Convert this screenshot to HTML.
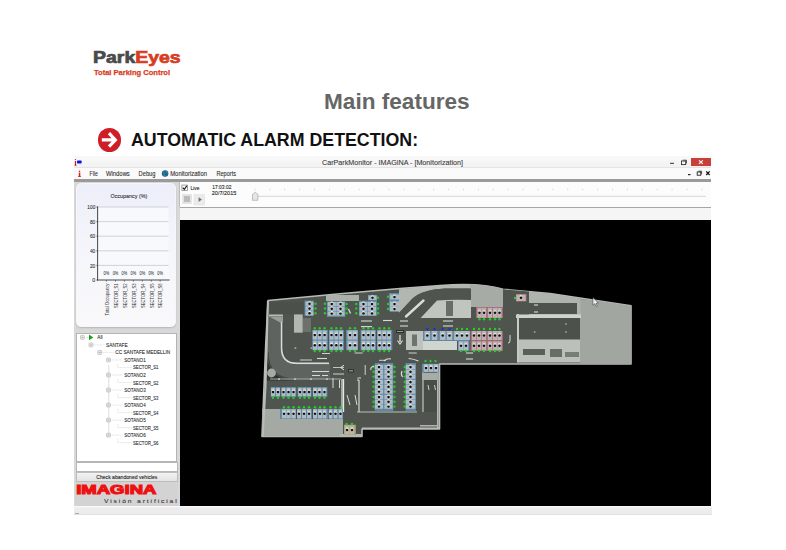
<!DOCTYPE html>
<html><head><meta charset="utf-8">
<style>
html,body{margin:0;padding:0;width:786px;height:550px;overflow:hidden;background:#fff;font-family:"Liberation Sans",sans-serif;}
.a{position:absolute;white-space:nowrap;}
#logo1{left:92.6px;top:47.4px;font-size:16.5px;transform:scaleX(1.18);transform-origin:0 0;font-weight:bold;color:#4a4a4a;line-height:20px;-webkit-text-stroke:0.7px #4a4a4a;}
#logo1 span{color:#d83c1e;-webkit-text-stroke:0.7px #d83c1e;}
#logo2{left:93.6px;top:68.4px;font-size:7.7px;letter-spacing:0px;transform:scaleX(0.98);transform-origin:0 0;font-weight:bold;color:#d83c1e;line-height:10px;-webkit-text-stroke:0.25px #d83c1e;}
#title{left:324px;top:89px;font-size:22.6px;font-weight:bold;color:#666;line-height:26px;}
#bullet{left:97.6px;top:128.3px;width:23.8px;height:23.8px;border-radius:50%;background:#d01e26;}
#head{left:131px;top:130px;font-size:17.8px;font-weight:bold;color:#111;line-height:20px;}

#win{left:73.5px;top:155.5px;width:637.5px;height:359.5px;background:#d8d8d8;}
#tbar{left:73.5px;top:155.5px;width:637.5px;height:11.6px;background:linear-gradient(#f9f9f9,#f2f2f2);}
#mbar{left:73.5px;top:167px;width:637.5px;height:12.5px;background:#fafafa;border-top:1px solid #e4e4e4;box-sizing:border-box;}
#thick{left:73.5px;top:179.2px;width:637.7px;height:2.5px;background:#9a9a9a;}
.t7{font-size:7px;color:#333;line-height:8px;}
#ttl{left:321px;top:158.5px;color:#444;}
#closeb{left:690.5px;top:157.5px;width:20.5px;height:8.5px;background:#c9403a;}
#toolb{left:179.8px;top:181.5px;width:531.2px;height:26px;background:#fcfcfc;border-bottom:1px solid #a6a6a6;box-sizing:border-box;}
#strip{left:179.8px;top:207.5px;width:531.2px;height:12.7px;background:#f5f5f5;}
#black{left:179.8px;top:220.3px;width:531.7px;height:286.1px;background:#000;}
#chartp{left:76.4px;top:183px;width:100px;height:144px;border-radius:5px;background:linear-gradient(#eceef9,#f4f5fb 40%,#f9f9fb);border:1px solid #f6f6f8;box-sizing:border-box;box-shadow:0 1px 1.5px #b8b8b8;}
#treep{left:76.4px;top:333px;width:100.8px;height:128.5px;background:#fff;border:1px solid #b4b4b4;box-sizing:border-box;}
#txtb{left:76.4px;top:462px;width:101.6px;height:9.5px;background:#fff;border:1px solid #b8b8b8;box-sizing:border-box;}
#btn{left:76.4px;top:472px;width:101.6px;height:9.5px;background:linear-gradient(#f2f2f2,#e3e3e3);border:1px solid #bdbdbd;box-sizing:border-box;}
#imag{left:74.5px;top:481.5px;width:103.5px;height:24.3px;background:#d3d3d3;}
#status{left:73.5px;top:506.4px;width:638px;height:8.8px;background:linear-gradient(#fafafa 15%,#ededed 20%,#ececec);border-bottom:1px solid #e2e2e2;box-sizing:border-box;}
</style></head><body>
<div class="a" id="logo1">Park<span>Eyes</span></div>
<div class="a" id="logo2">Total Parking Control</div>
<div class="a" id="title">Main features</div>
<div class="a" id="bullet"><svg width="24" height="24" viewBox="0 0 24 24" style="display:block"><path d="M3.8 11.9H16.5M11 5.2L17.3 11.9L11 18.6" stroke="#fff" stroke-width="3.2" fill="none"/></svg></div>
<div class="a" id="head">AUTOMATIC ALARM DETECTION:</div>
<div class="a" id="win"></div>
<div class="a" id="tbar"></div>
<div class="a" id="mbar"></div>
<div class="a" id="thick"></div>
<div class="a" id="closeb"></div>
<div class="a" id="toolb"></div>
<div class="a" id="strip"></div>
<div class="a" id="black"></div>
<div class="a" id="chartp"></div>
<div class="a" id="treep"></div>
<div class="a" id="txtb"></div>
<div class="a" id="btn"></div>
<div class="a" id="imag"></div>
<div class="a" id="status"></div>
<svg class="a" style="left:0;top:0" width="786" height="550" font-family="Liberation Sans"><rect x="74.9" y="161" width="1.2" height="4.4" fill="#d01a1a"/><rect x="74.5" y="164.8" width="2" height="0.8" fill="#d01a1a"/><circle cx="75.5" cy="159.6" r="0.65" fill="#d01a1a"/><rect x="77" y="160.5" width="4.6" height="3" rx="0.8" fill="#1010e0"/><text x="322" y="165.4" font-size="7.6" textLength="141" lengthAdjust="spacingAndGlyphs" fill="#3a3a3a" stroke="#3a3a3a" stroke-width="0.1">CarParkMonitor - IMAGiNA - [Monitorization]</text><rect x="670" y="162.8" width="4" height="1" fill="#333"/><rect x="681.5" y="161" width="4.2" height="3.6" fill="none" stroke="#333" stroke-width="0.9"/><path d="M682.8 160.2H686.5V163.4" fill="none" stroke="#333" stroke-width="0.8"/><path d="M699 160.3L702.8 163.8M702.8 160.3L699 163.8" stroke="#fff" stroke-width="1.1"/><rect x="688" y="174" width="2.5" height="1.2" fill="#222"/><rect x="697.2" y="172" width="3.6" height="3.2" fill="none" stroke="#222" stroke-width="0.9"/><path d="M698.3 171.2H701.6V174.2" fill="none" stroke="#222" stroke-width="0.8"/><path d="M706.2 171.4L709.6 175M709.6 171.4L706.2 175" stroke="#111" stroke-width="1.2"/><rect x="78.8" y="172.6" width="1.5" height="4.2" fill="#d42020"/><rect x="78.2" y="176" width="2.6" height="0.9" fill="#d42020"/><circle cx="79.5" cy="171.2" r="0.75" fill="#d42020"/><text x="89.6" y="176.2" font-size="7.4" textLength="8.2" lengthAdjust="spacingAndGlyphs" fill="#2a2a2a" stroke="#2a2a2a" stroke-width="0.1">File</text><text x="106" y="176.2" font-size="7.4" textLength="23.8" lengthAdjust="spacingAndGlyphs" fill="#2a2a2a" stroke="#2a2a2a" stroke-width="0.1">Windows</text><text x="138.6" y="176.2" font-size="7.4" textLength="16.8" lengthAdjust="spacingAndGlyphs" fill="#2a2a2a" stroke="#2a2a2a" stroke-width="0.1">Debug</text><text x="170.2" y="176.2" font-size="7.4" textLength="36.8" lengthAdjust="spacingAndGlyphs" fill="#2a2a2a" stroke="#2a2a2a" stroke-width="0.1">Monitorization</text><text x="216.4" y="176.2" font-size="7.4" textLength="19.6" lengthAdjust="spacingAndGlyphs" fill="#2a2a2a" stroke="#2a2a2a" stroke-width="0.1">Reports</text><circle cx="165.1" cy="173.5" r="3.3" fill="#1f5fae"/><path d="M163 171.5q1.5 1 1 2.5t1.8 2.2M166.5 170.8q-.5 1.5 1.2 2" stroke="#3a9a3a" stroke-width="1.1" fill="none"/><rect x="98.5" y="207" width="70" height="73" fill="#f8f9fd"/><line x1="98" y1="207.0" x2="168.5" y2="207.0" stroke="#c6c8cf" stroke-width="0.8"/><text x="87.3" y="209.1" font-size="5.8" textLength="8.0" lengthAdjust="spacingAndGlyphs" fill="#333" stroke="#333" stroke-width="0.1">100</text><line x1="96.3" y1="207.0" x2="98" y2="207.0" stroke="#333" stroke-width="0.6"/><line x1="98" y1="221.6" x2="168.5" y2="221.6" stroke="#c6c8cf" stroke-width="0.8"/><text x="89.89999999999999" y="223.7" font-size="5.8" textLength="5.4" lengthAdjust="spacingAndGlyphs" fill="#333" stroke="#333" stroke-width="0.1">80</text><line x1="96.3" y1="221.6" x2="98" y2="221.6" stroke="#333" stroke-width="0.6"/><line x1="98" y1="236.2" x2="168.5" y2="236.2" stroke="#c6c8cf" stroke-width="0.8"/><text x="89.89999999999999" y="238.29999999999998" font-size="5.8" textLength="5.4" lengthAdjust="spacingAndGlyphs" fill="#333" stroke="#333" stroke-width="0.1">60</text><line x1="96.3" y1="236.2" x2="98" y2="236.2" stroke="#333" stroke-width="0.6"/><line x1="98" y1="250.8" x2="168.5" y2="250.8" stroke="#c6c8cf" stroke-width="0.8"/><text x="89.89999999999999" y="252.9" font-size="5.8" textLength="5.4" lengthAdjust="spacingAndGlyphs" fill="#333" stroke="#333" stroke-width="0.1">40</text><line x1="96.3" y1="250.8" x2="98" y2="250.8" stroke="#333" stroke-width="0.6"/><line x1="98" y1="265.4" x2="168.5" y2="265.4" stroke="#c6c8cf" stroke-width="0.8"/><text x="89.89999999999999" y="267.5" font-size="5.8" textLength="5.4" lengthAdjust="spacingAndGlyphs" fill="#333" stroke="#333" stroke-width="0.1">20</text><line x1="96.3" y1="265.4" x2="98" y2="265.4" stroke="#333" stroke-width="0.6"/><text x="92.3" y="282.1" font-size="5.8" textLength="3.0" lengthAdjust="spacingAndGlyphs" fill="#333" stroke="#333" stroke-width="0.1">0</text><line x1="96.3" y1="280.0" x2="98" y2="280.0" stroke="#333" stroke-width="0.6"/><line x1="97.6" y1="206.5" x2="97.6" y2="280.5" stroke="#333" stroke-width="0.9"/><line x1="97.2" y1="280" x2="169.6" y2="280" stroke="#333" stroke-width="0.9"/><text x="110.5" y="197.9" font-size="5.9" textLength="36.9" lengthAdjust="spacingAndGlyphs" fill="#333" stroke="#333" stroke-width="0.1">Occupancy (%)</text><line x1="106.4" y1="280" x2="106.4" y2="281.6" stroke="#333" stroke-width="0.6"/><text x="103.60000000000001" y="274.6" font-size="5.4" textLength="5.6" lengthAdjust="spacingAndGlyphs" fill="#333" stroke="#333" stroke-width="0.05">0%</text><g transform="translate(108.7,283.5) rotate(-90)"><text x="-32" y="0" font-size="5.0" textLength="32" lengthAdjust="spacingAndGlyphs" fill="#333" stroke="#333" stroke-width="0">Total Occupancy</text></g><line x1="115.5" y1="280" x2="115.5" y2="281.6" stroke="#333" stroke-width="0.6"/><text x="112.7" y="274.6" font-size="5.4" textLength="5.6" lengthAdjust="spacingAndGlyphs" fill="#333" stroke="#333" stroke-width="0.05">0%</text><g transform="translate(117.8,283.5) rotate(-90)"><text x="-24.5" y="0" font-size="5.0" textLength="24.5" lengthAdjust="spacingAndGlyphs" fill="#333" stroke="#333" stroke-width="0">SECTOR_S1</text></g><line x1="124.4" y1="280" x2="124.4" y2="281.6" stroke="#333" stroke-width="0.6"/><text x="121.60000000000001" y="274.6" font-size="5.4" textLength="5.6" lengthAdjust="spacingAndGlyphs" fill="#333" stroke="#333" stroke-width="0.05">0%</text><g transform="translate(126.7,283.5) rotate(-90)"><text x="-24.5" y="0" font-size="5.0" textLength="24.5" lengthAdjust="spacingAndGlyphs" fill="#333" stroke="#333" stroke-width="0">SECTOR_S2</text></g><line x1="133.4" y1="280" x2="133.4" y2="281.6" stroke="#333" stroke-width="0.6"/><text x="130.6" y="274.6" font-size="5.4" textLength="5.6" lengthAdjust="spacingAndGlyphs" fill="#333" stroke="#333" stroke-width="0.05">0%</text><g transform="translate(135.70000000000002,283.5) rotate(-90)"><text x="-24.5" y="0" font-size="5.0" textLength="24.5" lengthAdjust="spacingAndGlyphs" fill="#333" stroke="#333" stroke-width="0">SECTOR_S3</text></g><line x1="142.3" y1="280" x2="142.3" y2="281.6" stroke="#333" stroke-width="0.6"/><text x="139.5" y="274.6" font-size="5.4" textLength="5.6" lengthAdjust="spacingAndGlyphs" fill="#333" stroke="#333" stroke-width="0.05">0%</text><g transform="translate(144.60000000000002,283.5) rotate(-90)"><text x="-24.5" y="0" font-size="5.0" textLength="24.5" lengthAdjust="spacingAndGlyphs" fill="#333" stroke="#333" stroke-width="0">SECTOR_S4</text></g><line x1="151.2" y1="280" x2="151.2" y2="281.6" stroke="#333" stroke-width="0.6"/><text x="148.39999999999998" y="274.6" font-size="5.4" textLength="5.6" lengthAdjust="spacingAndGlyphs" fill="#333" stroke="#333" stroke-width="0.05">0%</text><g transform="translate(153.5,283.5) rotate(-90)"><text x="-24.5" y="0" font-size="5.0" textLength="24.5" lengthAdjust="spacingAndGlyphs" fill="#333" stroke="#333" stroke-width="0">SECTOR_S5</text></g><line x1="160.1" y1="280" x2="160.1" y2="281.6" stroke="#333" stroke-width="0.6"/><text x="157.29999999999998" y="274.6" font-size="5.4" textLength="5.6" lengthAdjust="spacingAndGlyphs" fill="#333" stroke="#333" stroke-width="0.05">0%</text><g transform="translate(162.4,283.5) rotate(-90)"><text x="-24.5" y="0" font-size="5.0" textLength="24.5" lengthAdjust="spacingAndGlyphs" fill="#333" stroke="#333" stroke-width="0">SECTOR_S6</text></g><line x1="108.8" y1="365" x2="108.8" y2="434" stroke="#d0d0d0" stroke-width="0.7"/><text x="97.3" y="339.4" font-size="5.6" textLength="5.2" lengthAdjust="spacingAndGlyphs" fill="#2a2a2a" stroke="#2a2a2a" stroke-width="0.1">All</text><rect x="80.5" y="335.5" width="3.8" height="3.8" rx="0.6" fill="#ececec" stroke="#ababab" stroke-width="0.6"/><line x1="81.4" y1="337.4" x2="83.4" y2="337.4" stroke="#777" stroke-width="0.5"/><line x1="84.3" y1="337.4" x2="88.6" y2="337.4" stroke="#c8c8c8" stroke-width="0.6" stroke-dasharray="0.8 0.6"/><path d="M89 334.5L93.3 337.4L89 340.29999999999995Z" fill="#18a018"/><text x="106" y="346.91999999999996" font-size="5.6" textLength="21.7" lengthAdjust="spacingAndGlyphs" fill="#2a2a2a" stroke="#2a2a2a" stroke-width="0.1">SANTAFE</text><rect x="89" y="343.02" width="3.8" height="3.8" rx="0.6" fill="#ececec" stroke="#ababab" stroke-width="0.6"/><line x1="89.9" y1="344.91999999999996" x2="91.9" y2="344.91999999999996" stroke="#777" stroke-width="0.5"/><line x1="92.8" y1="344.91999999999996" x2="104.5" y2="344.91999999999996" stroke="#c8c8c8" stroke-width="0.6" stroke-dasharray="0.8 0.6"/><text x="115.2" y="354.44" font-size="5.6" textLength="55" lengthAdjust="spacingAndGlyphs" fill="#2a2a2a" stroke="#2a2a2a" stroke-width="0.1">CC SANTAFE MEDELLIN</text><rect x="97.8" y="350.54" width="3.8" height="3.8" rx="0.6" fill="#ececec" stroke="#ababab" stroke-width="0.6"/><line x1="98.7" y1="352.44" x2="100.7" y2="352.44" stroke="#777" stroke-width="0.5"/><line x1="101.6" y1="352.44" x2="113.7" y2="352.44" stroke="#c8c8c8" stroke-width="0.6" stroke-dasharray="0.8 0.6"/><text x="124.3" y="361.96" font-size="5.6" textLength="21.4" lengthAdjust="spacingAndGlyphs" fill="#2a2a2a" stroke="#2a2a2a" stroke-width="0.1">SOTANO1</text><rect x="106.6" y="358.06" width="3.8" height="3.8" rx="0.6" fill="#ececec" stroke="#ababab" stroke-width="0.6"/><line x1="107.5" y1="359.96" x2="109.5" y2="359.96" stroke="#777" stroke-width="0.5"/><line x1="110.39999999999999" y1="359.96" x2="122.8" y2="359.96" stroke="#c8c8c8" stroke-width="0.6" stroke-dasharray="0.8 0.6"/><text x="133" y="369.47999999999996" font-size="5.6" textLength="25.5" lengthAdjust="spacingAndGlyphs" fill="#2a2a2a" stroke="#2a2a2a" stroke-width="0.1">SECTOR_S1</text><path d="M117.9 363.87999999999994V367.47999999999996H131.8" fill="none" stroke="#c8c8c8" stroke-width="0.6" stroke-dasharray="0.8 0.6"/><text x="124.3" y="377.0" font-size="5.6" textLength="21.4" lengthAdjust="spacingAndGlyphs" fill="#2a2a2a" stroke="#2a2a2a" stroke-width="0.1">SOTANO2</text><rect x="106.6" y="373.1" width="3.8" height="3.8" rx="0.6" fill="#ececec" stroke="#ababab" stroke-width="0.6"/><line x1="107.5" y1="375.0" x2="109.5" y2="375.0" stroke="#777" stroke-width="0.5"/><line x1="110.39999999999999" y1="375.0" x2="122.8" y2="375.0" stroke="#c8c8c8" stroke-width="0.6" stroke-dasharray="0.8 0.6"/><text x="133" y="384.52" font-size="5.6" textLength="25.5" lengthAdjust="spacingAndGlyphs" fill="#2a2a2a" stroke="#2a2a2a" stroke-width="0.1">SECTOR_S2</text><path d="M117.9 378.91999999999996V382.52H131.8" fill="none" stroke="#c8c8c8" stroke-width="0.6" stroke-dasharray="0.8 0.6"/><text x="124.3" y="392.03999999999996" font-size="5.6" textLength="21.4" lengthAdjust="spacingAndGlyphs" fill="#2a2a2a" stroke="#2a2a2a" stroke-width="0.1">SOTANO3</text><rect x="106.6" y="388.14" width="3.8" height="3.8" rx="0.6" fill="#ececec" stroke="#ababab" stroke-width="0.6"/><line x1="107.5" y1="390.03999999999996" x2="109.5" y2="390.03999999999996" stroke="#777" stroke-width="0.5"/><line x1="110.39999999999999" y1="390.03999999999996" x2="122.8" y2="390.03999999999996" stroke="#c8c8c8" stroke-width="0.6" stroke-dasharray="0.8 0.6"/><text x="133" y="399.55999999999995" font-size="5.6" textLength="25.5" lengthAdjust="spacingAndGlyphs" fill="#2a2a2a" stroke="#2a2a2a" stroke-width="0.1">SECTOR_S3</text><path d="M117.9 393.9599999999999V397.55999999999995H131.8" fill="none" stroke="#c8c8c8" stroke-width="0.6" stroke-dasharray="0.8 0.6"/><text x="124.3" y="407.08" font-size="5.6" textLength="21.4" lengthAdjust="spacingAndGlyphs" fill="#2a2a2a" stroke="#2a2a2a" stroke-width="0.1">SOTANO4</text><rect x="106.6" y="403.18" width="3.8" height="3.8" rx="0.6" fill="#ececec" stroke="#ababab" stroke-width="0.6"/><line x1="107.5" y1="405.08" x2="109.5" y2="405.08" stroke="#777" stroke-width="0.5"/><line x1="110.39999999999999" y1="405.08" x2="122.8" y2="405.08" stroke="#c8c8c8" stroke-width="0.6" stroke-dasharray="0.8 0.6"/><text x="133" y="414.59999999999997" font-size="5.6" textLength="25.5" lengthAdjust="spacingAndGlyphs" fill="#2a2a2a" stroke="#2a2a2a" stroke-width="0.1">SECTOR_S4</text><path d="M117.9 408.99999999999994V412.59999999999997H131.8" fill="none" stroke="#c8c8c8" stroke-width="0.6" stroke-dasharray="0.8 0.6"/><text x="124.3" y="422.12" font-size="5.6" textLength="21.4" lengthAdjust="spacingAndGlyphs" fill="#2a2a2a" stroke="#2a2a2a" stroke-width="0.1">SOTANO5</text><rect x="106.6" y="418.22" width="3.8" height="3.8" rx="0.6" fill="#ececec" stroke="#ababab" stroke-width="0.6"/><line x1="107.5" y1="420.12" x2="109.5" y2="420.12" stroke="#777" stroke-width="0.5"/><line x1="110.39999999999999" y1="420.12" x2="122.8" y2="420.12" stroke="#c8c8c8" stroke-width="0.6" stroke-dasharray="0.8 0.6"/><text x="133" y="429.64" font-size="5.6" textLength="25.5" lengthAdjust="spacingAndGlyphs" fill="#2a2a2a" stroke="#2a2a2a" stroke-width="0.1">SECTOR_S5</text><path d="M117.9 424.03999999999996V427.64H131.8" fill="none" stroke="#c8c8c8" stroke-width="0.6" stroke-dasharray="0.8 0.6"/><text x="124.3" y="437.15999999999997" font-size="5.6" textLength="21.4" lengthAdjust="spacingAndGlyphs" fill="#2a2a2a" stroke="#2a2a2a" stroke-width="0.1">SOTANO6</text><rect x="106.6" y="433.26" width="3.8" height="3.8" rx="0.6" fill="#ececec" stroke="#ababab" stroke-width="0.6"/><line x1="107.5" y1="435.15999999999997" x2="109.5" y2="435.15999999999997" stroke="#777" stroke-width="0.5"/><line x1="110.39999999999999" y1="435.15999999999997" x2="122.8" y2="435.15999999999997" stroke="#c8c8c8" stroke-width="0.6" stroke-dasharray="0.8 0.6"/><text x="133" y="444.67999999999995" font-size="5.6" textLength="25.5" lengthAdjust="spacingAndGlyphs" fill="#2a2a2a" stroke="#2a2a2a" stroke-width="0.1">SECTOR_S6</text><path d="M117.9 439.0799999999999V442.67999999999995H131.8" fill="none" stroke="#c8c8c8" stroke-width="0.6" stroke-dasharray="0.8 0.6"/><text x="126.8" y="479" font-size="5.9" textLength="61" lengthAdjust="spacingAndGlyphs" fill="#222" stroke="#222" stroke-width="0.1" text-anchor="middle">Check abandoned vehicles</text><text x="76.2" y="494.2" font-size="12.9" font-weight="bold" fill="#ee1111" stroke="#ee1111" stroke-width="1.1" textLength="80.2" lengthAdjust="spacingAndGlyphs">IMAGiNA</text><text x="103.9" y="503.0" font-size="5.2" textLength="72.8" lengthAdjust="spacingAndGlyphs" fill="#3a3a3a" stroke="#3a3a3a" stroke-width="0.1">V i s i ó n &#160; a r t i f i c i a l</text><rect x="75" y="513" width="4" height="0.8" fill="#999"/><line x1="179.5" y1="181.5" x2="179.5" y2="207" stroke="#b4b4b4" stroke-width="0.8"/><rect x="181.9" y="185.1" width="5.6" height="5.4" fill="#fff" stroke="#777" stroke-width="0.7"/><path d="M182.8 187.6L184.3 189.4L186.8 185.9" fill="none" stroke="#111" stroke-width="1.1"/><text x="190.5" y="189.7" font-size="5.7" textLength="9.0" lengthAdjust="spacingAndGlyphs" fill="#222" stroke="#222" stroke-width="0.1">Live</text><text x="212.3" y="189.0" font-size="5.7" textLength="19.1" lengthAdjust="spacingAndGlyphs" fill="#222" stroke="#222" stroke-width="0.1">17:03:02</text><text x="211.8" y="194.8" font-size="5.7" textLength="24.5" lengthAdjust="spacingAndGlyphs" fill="#222" stroke="#222" stroke-width="0.1">20/7/2015</text><rect x="182.6" y="194.6" width="9" height="9" fill="#e4e4e4" stroke="#d8d8d8" stroke-width="0.5"/><path d="M184 197H190M184 199H190M184 201H190" stroke="#8a8a8a" stroke-width="0.9"/><rect x="194" y="194.5" width="10.7" height="10.5" fill="#ebebeb" stroke="#dedede" stroke-width="0.5"/><path d="M198.6 197.3L201.8 199.6L198.6 201.9Z" fill="#6e6e6e"/><line x1="254.9" y1="188.6" x2="254.9" y2="190.4" stroke="#c8c8c8" stroke-width="0.6"/><line x1="269.8" y1="188.6" x2="269.8" y2="190.4" stroke="#c8c8c8" stroke-width="0.6"/><line x1="284.7" y1="188.6" x2="284.7" y2="190.4" stroke="#c8c8c8" stroke-width="0.6"/><line x1="299.6" y1="188.6" x2="299.6" y2="190.4" stroke="#c8c8c8" stroke-width="0.6"/><line x1="314.5" y1="188.6" x2="314.5" y2="190.4" stroke="#c8c8c8" stroke-width="0.6"/><line x1="329.4" y1="188.6" x2="329.4" y2="190.4" stroke="#c8c8c8" stroke-width="0.6"/><line x1="344.3" y1="188.6" x2="344.3" y2="190.4" stroke="#c8c8c8" stroke-width="0.6"/><line x1="359.2" y1="188.6" x2="359.2" y2="190.4" stroke="#c8c8c8" stroke-width="0.6"/><line x1="374.1" y1="188.6" x2="374.1" y2="190.4" stroke="#c8c8c8" stroke-width="0.6"/><line x1="389.0" y1="188.6" x2="389.0" y2="190.4" stroke="#c8c8c8" stroke-width="0.6"/><line x1="403.9" y1="188.6" x2="403.9" y2="190.4" stroke="#c8c8c8" stroke-width="0.6"/><line x1="418.8" y1="188.6" x2="418.8" y2="190.4" stroke="#c8c8c8" stroke-width="0.6"/><line x1="433.7" y1="188.6" x2="433.7" y2="190.4" stroke="#c8c8c8" stroke-width="0.6"/><line x1="448.6" y1="188.6" x2="448.6" y2="190.4" stroke="#c8c8c8" stroke-width="0.6"/><line x1="463.5" y1="188.6" x2="463.5" y2="190.4" stroke="#c8c8c8" stroke-width="0.6"/><line x1="478.4" y1="188.6" x2="478.4" y2="190.4" stroke="#c8c8c8" stroke-width="0.6"/><line x1="493.3" y1="188.6" x2="493.3" y2="190.4" stroke="#c8c8c8" stroke-width="0.6"/><line x1="508.2" y1="188.6" x2="508.2" y2="190.4" stroke="#c8c8c8" stroke-width="0.6"/><line x1="523.1" y1="188.6" x2="523.1" y2="190.4" stroke="#c8c8c8" stroke-width="0.6"/><line x1="538.0" y1="188.6" x2="538.0" y2="190.4" stroke="#c8c8c8" stroke-width="0.6"/><line x1="552.9" y1="188.6" x2="552.9" y2="190.4" stroke="#c8c8c8" stroke-width="0.6"/><line x1="567.8" y1="188.6" x2="567.8" y2="190.4" stroke="#c8c8c8" stroke-width="0.6"/><line x1="582.7" y1="188.6" x2="582.7" y2="190.4" stroke="#c8c8c8" stroke-width="0.6"/><line x1="597.6" y1="188.6" x2="597.6" y2="190.4" stroke="#c8c8c8" stroke-width="0.6"/><line x1="612.5" y1="188.6" x2="612.5" y2="190.4" stroke="#c8c8c8" stroke-width="0.6"/><line x1="627.4" y1="188.6" x2="627.4" y2="190.4" stroke="#c8c8c8" stroke-width="0.6"/><line x1="642.3" y1="188.6" x2="642.3" y2="190.4" stroke="#c8c8c8" stroke-width="0.6"/><line x1="657.2" y1="188.6" x2="657.2" y2="190.4" stroke="#c8c8c8" stroke-width="0.6"/><line x1="672.1" y1="188.6" x2="672.1" y2="190.4" stroke="#c8c8c8" stroke-width="0.6"/><line x1="687.0" y1="188.6" x2="687.0" y2="190.4" stroke="#c8c8c8" stroke-width="0.6"/><line x1="701.9" y1="188.6" x2="701.9" y2="190.4" stroke="#c8c8c8" stroke-width="0.6"/><line x1="258" y1="196.3" x2="706" y2="196.3" stroke="#d6d6d6" stroke-width="1"/><path d="M252.5 194.5L255.2 192.3L257.9 194.5V200.3H252.5Z" fill="#e6e6e6" stroke="#9a9a9a" stroke-width="0.6"/></svg>
<svg class="a" style="left:0;top:0" width="786" height="550"><path d="M268 300.5L340 293.7L400 288.5L440 285.6Q480 282.5 503 289.3L550 293.5L593 300L631 305.7V364H439.5V429H362V436.5H262L265.7 345Z" fill="#4f544f" stroke="#b7bcb7" stroke-width="1.6" stroke-linejoin="round"/><polygon points="262,409 280,409 280,419 343,419 343,436.5 262,436.5" fill="#a4a9a4"/><polygon points="580,299 593,300 631,305.7 631,364 580,364" fill="#a1a6a1"/><path d="M470 284.2Q490 284.5 503 289.3V307H470Z" fill="#a6aba6"/><polygon points="503,289.3 529,291.5 529,302 503,302" fill="#4f544f"/><polygon points="529,291.6 550,293.5 580,298.5 581,318 529,318" fill="#aeb3ae"/><rect x="529" y="303" width="48" height="11" fill="#4e534e"/><rect x="516" y="314.5" width="65" height="3.5" fill="#ced3ce"/><rect x="519" y="318" width="61" height="21.5" fill="#4c514c"/><rect x="518" y="339.5" width="62" height="23.0" fill="#bbc0bb"/><rect x="517" y="314" width="2" height="48.5" fill="#c6cbc6"/><rect x="523" y="349" width="22" height="6" fill="#5a5f5a"/><rect x="550" y="349" width="12" height="8" fill="#686d68"/><rect x="565" y="352" width="14" height="5" fill="#787d78"/><circle cx="534.7" cy="332" r="0.9" fill="#989d98"/><circle cx="566" cy="324" r="0.9" fill="#989d98"/><circle cx="566" cy="332" r="0.9" fill="#989d98"/><path d="M399 289.2L440 285.6Q455 284.6 470 284.4V288.6L445 288.5Q422 289.5 412 299L399 313Z" fill="#b2b7b2"/><path d="M470 288.6L445 288.5Q422 289.5 412 299L399 313V318H420.6L437 300.5Q450 299.5 471 300V288.6Z" fill="#4f544f"/><path d="M420.6 318L437 300.5Q450 299.5 471 300V318Z" fill="#c0c5c0"/><rect x="446" y="301" width="7" height="15" fill="#686d68"/><line x1="406" y1="316.5" x2="423.5" y2="300.5" stroke="#d8ddd8" stroke-width="2.4" stroke-linecap="round"/><rect x="396" y="330" width="8" height="3" fill="#2e2e2e"/><rect x="397" y="331" width="6" height="1" fill="#989d98"/><rect x="326" y="295" width="33" height="6" fill="#abb0ab"/><rect x="270" y="302" width="34" height="12.5" fill="#4b504b"/><rect x="269" y="314.5" width="14" height="2.0" fill="#b7bcb7"/><rect x="294" y="314.4" width="8.7" height="18.3" fill="#b2b7b2"/><rect x="303" y="318" width="8" height="14" fill="#6c716c"/><path d="M268.5 317 H282.5 V348 Q282.5 363.6 298 363.6 H330 V379 H296 Q268 379 268 352 Z" fill="#5f635f"/><path d="M266.5 350 Q266.5 380.5 296 380.5 H266 Z" fill="#2f322f"/><path d="M268 352 Q268 379 296 379" fill="none" stroke="#3a3d3a" stroke-width="0.9"/><path d="M270 317 L283 317 L283 324 Z" fill="#9a9e9a"/><path d="M282.6 322 L282.6 348 Q282.6 364.2 298 364.2 L329 364.2" fill="none" stroke="#3e413e" stroke-width="1.2"/><path d="M281.6 322 L281.6 348 Q281.6 363.4 297 363.4 L329 363.4" fill="none" stroke="#d8dcd8" stroke-width="1.6"/><line x1="270" y1="379" x2="341" y2="379" stroke="#a6aba6" stroke-width="1.0"/><rect x="278.2" y="378.2" width="1.6" height="1.8" fill="#c6cbc6"/><rect x="294.2" y="378.2" width="1.6" height="1.8" fill="#c6cbc6"/><rect x="310.2" y="378.2" width="1.6" height="1.8" fill="#c6cbc6"/><rect x="326.2" y="378.2" width="1.6" height="1.8" fill="#c6cbc6"/><line x1="342" y1="379" x2="342" y2="419" stroke="#bec3be" stroke-width="1.5"/><polyline points="267.9,301 266.8,345 265.5,387 262.8,436" fill="none" stroke="#b8bcb8" stroke-width="2.0"/><circle cx="271.5" cy="373" r="4.4" fill="#a6aaa6"/><rect x="294.5" y="347.2" width="1.8" height="1.8" fill="#9ea39e"/><rect x="310.5" y="347.2" width="1.8" height="1.8" fill="#9ea39e"/><line x1="312" y1="371.5" x2="329" y2="371.5" stroke="#d6dbd6" stroke-width="1.0"/><line x1="312" y1="375.5" x2="320" y2="375.5" stroke="#d6dbd6" stroke-width="1.0"/><line x1="322" y1="375.5" x2="328" y2="375.5" stroke="#d6dbd6" stroke-width="1.0"/><path d="M344 365.2L340.5 367.5L344 369.8" fill="none" stroke="#dee3de" stroke-width="1"/><line x1="333" y1="367.5" x2="344" y2="367.5" stroke="#ced3ce" stroke-width="0.9"/><rect x="348" y="369" width="6" height="3.5" fill="#333"/><rect x="349" y="370" width="4" height="1.5" fill="#888"/><line x1="333" y1="378" x2="333" y2="388" stroke="#d6dbd6" stroke-width="1.0"/><line x1="339.5" y1="380" x2="339.5" y2="388" stroke="#d6dbd6" stroke-width="1.0"/><line x1="357" y1="412" x2="417" y2="412" stroke="#b9beb9" stroke-width="1.2"/><line x1="420" y1="425.8" x2="437" y2="425.8" stroke="#c2c7c2" stroke-width="1.3"/><line x1="423" y1="364" x2="423" y2="412" stroke="#d3d8d3" stroke-width="1.0"/><line x1="437.8" y1="364" x2="437.8" y2="428" stroke="#b7bcb7" stroke-width="1.5"/><rect x="424" y="380" width="13" height="32" fill="#484d48"/><line x1="343.5" y1="379" x2="343.5" y2="412" stroke="#e4e9e4" stroke-width="1.3"/><line x1="359" y1="380" x2="359" y2="412" stroke="#d6dbd6" stroke-width="1.2"/><line x1="357" y1="380" x2="359" y2="380" stroke="#d6dbd6" stroke-width="1.2"/><line x1="362" y1="428.3" x2="439" y2="428.3" stroke="#b7bcb7" stroke-width="1.6"/><rect x="340" y="434" width="22" height="3" fill="#b3b8b3"/><rect x="406" y="331" width="44" height="19" fill="#bdc2bd"/><rect x="412" y="334.5" width="5" height="11.5" fill="#6e736e"/><rect x="423" y="343.5" width="15" height="3.5" fill="#585d58"/><rect x="423" y="341" width="34" height="9" fill="#d0d5d0"/><rect x="422" y="373" width="16.5" height="7" fill="#a7aca7"/><rect x="304.5" y="300.5" width="9.0" height="15.5" fill="#5f88a6"/><rect x="305.5" y="301.62" width="8.0" height="4.17" fill="#aebbc4"/><ellipse cx="309.5" cy="302.1" rx="1.3" ry="0.9" fill="#ecf1ec"/><circle cx="309.5" cy="303.7" r="1.2" fill="#111"/><rect x="305.5" y="306.42" width="8.0" height="4.17" fill="#aebbc4"/><ellipse cx="309.5" cy="306.9" rx="1.3" ry="0.9" fill="#ecf1ec"/><circle cx="309.5" cy="308.5" r="1.2" fill="#111"/><rect x="305.5" y="311.22" width="8.0" height="4.17" fill="#aebbc4"/><ellipse cx="309.5" cy="311.7" rx="1.3" ry="0.9" fill="#ecf1ec"/><circle cx="309.5" cy="313.3" r="1.2" fill="#111"/><circle cx="315.5" cy="303.8" r="1.2" fill="#22d022"/><circle cx="315.5" cy="308.5" r="1.2" fill="#22d022"/><circle cx="315.5" cy="313.3" r="1.2" fill="#22d022"/><circle cx="325" cy="303.8" r="1.2" fill="#22d022"/><circle cx="325" cy="308.5" r="1.2" fill="#22d022"/><circle cx="325" cy="313.3" r="1.2" fill="#22d022"/><rect x="327" y="301.5" width="18.3" height="15.5" fill="#5f88a6"/><rect x="327.73" y="301.92" width="8.15" height="4.17" fill="#aebbc4"/><ellipse cx="331.8" cy="302.4" rx="1.3" ry="0.9" fill="#ecf1ec"/><circle cx="331.8" cy="304" r="1.2" fill="#111"/><rect x="327.73" y="306.72" width="8.15" height="4.17" fill="#aebbc4"/><ellipse cx="331.8" cy="307.2" rx="1.3" ry="0.9" fill="#ecf1ec"/><circle cx="331.8" cy="308.8" r="1.2" fill="#111"/><rect x="327.73" y="311.52" width="8.15" height="4.17" fill="#aebbc4"/><ellipse cx="331.8" cy="312.0" rx="1.3" ry="0.9" fill="#ecf1ec"/><circle cx="331.8" cy="313.6" r="1.2" fill="#111"/><rect x="336.43" y="301.92" width="8.15" height="4.17" fill="#aebbc4"/><ellipse cx="340.5" cy="302.4" rx="1.3" ry="0.9" fill="#ecf1ec"/><circle cx="340.5" cy="304" r="1.2" fill="#111"/><rect x="336.43" y="306.72" width="8.15" height="4.17" fill="#aebbc4"/><ellipse cx="340.5" cy="307.2" rx="1.3" ry="0.9" fill="#ecf1ec"/><circle cx="340.5" cy="308.8" r="1.2" fill="#111"/><rect x="336.43" y="311.52" width="8.15" height="4.17" fill="#aebbc4"/><ellipse cx="340.5" cy="312.0" rx="1.3" ry="0.9" fill="#ecf1ec"/><circle cx="340.5" cy="313.6" r="1.2" fill="#111"/><circle cx="346.6" cy="304" r="1.2" fill="#22d022"/><circle cx="346.6" cy="308.5" r="1.2" fill="#22d022"/><circle cx="346.6" cy="313.3" r="1.2" fill="#22d022"/><circle cx="356.3" cy="304" r="1.2" fill="#22d022"/><circle cx="356.3" cy="308.5" r="1.2" fill="#22d022"/><circle cx="356.3" cy="313.3" r="1.2" fill="#22d022"/><rect x="359" y="300.6" width="18" height="15.4" fill="#5f88a6"/><rect x="359.5" y="301.93" width="8.0" height="4.13" fill="#aebbc4"/><ellipse cx="363.5" cy="302.4" rx="1.3" ry="0.9" fill="#ecf1ec"/><circle cx="363.5" cy="304" r="1.2" fill="#111"/><rect x="359.5" y="306.73" width="8.0" height="4.13" fill="#aebbc4"/><ellipse cx="363.5" cy="307.2" rx="1.3" ry="0.9" fill="#ecf1ec"/><circle cx="363.5" cy="308.8" r="1.2" fill="#111"/><rect x="359.5" y="311.33" width="8.0" height="4.13" fill="#aebbc4"/><ellipse cx="363.5" cy="311.8" rx="1.3" ry="0.9" fill="#ecf1ec"/><circle cx="363.5" cy="313.4" r="1.2" fill="#111"/><rect x="368.0" y="301.93" width="8.0" height="4.13" fill="#aebbc4"/><ellipse cx="372" cy="302.4" rx="1.3" ry="0.9" fill="#ecf1ec"/><circle cx="372" cy="304" r="1.2" fill="#111"/><rect x="368.0" y="306.73" width="8.0" height="4.13" fill="#aebbc4"/><ellipse cx="372" cy="307.2" rx="1.3" ry="0.9" fill="#ecf1ec"/><circle cx="372" cy="308.8" r="1.2" fill="#111"/><rect x="368.0" y="311.33" width="8.0" height="4.13" fill="#aebbc4"/><ellipse cx="372" cy="311.8" rx="1.3" ry="0.9" fill="#ecf1ec"/><circle cx="372" cy="313.4" r="1.2" fill="#111"/><rect x="368" y="295" width="9" height="5.6" fill="#5f88a6"/><rect x="368.5" y="295.5" width="8.0" height="4.6" fill="#aebbc4"/><ellipse cx="372.5" cy="296.2" rx="1.3" ry="0.9" fill="#ecf1ec"/><circle cx="372.5" cy="297.8" r="1.2" fill="#111"/><circle cx="378" cy="297.7" r="1.2" fill="#22d022"/><circle cx="378" cy="304" r="1.2" fill="#22d022"/><circle cx="378" cy="308.5" r="1.2" fill="#22d022"/><circle cx="378" cy="313.3" r="1.2" fill="#22d022"/><circle cx="388" cy="296.7" r="1.2" fill="#22d022"/><circle cx="388" cy="304" r="1.2" fill="#22d022"/><circle cx="388" cy="309" r="1.2" fill="#22d022"/><rect x="389" y="293" width="10" height="18" fill="#5f88a6"/><rect x="390.0" y="294.5" width="9.0" height="5.0" fill="#aebbc4"/><ellipse cx="394.5" cy="295.4" rx="1.3" ry="0.9" fill="#ecf1ec"/><circle cx="394.5" cy="297" r="1.2" fill="#111"/><rect x="390.0" y="301.5" width="9.0" height="5.0" fill="#aebbc4"/><ellipse cx="394.5" cy="302.4" rx="1.3" ry="0.9" fill="#ecf1ec"/><circle cx="394.5" cy="304" r="1.2" fill="#111"/><rect x="390.0" y="306.5" width="9.0" height="5.0" fill="#aebbc4"/><ellipse cx="394.5" cy="307.4" rx="1.3" ry="0.9" fill="#ecf1ec"/><circle cx="394.5" cy="309" r="1.2" fill="#111"/><rect x="312.5" y="329.9" width="15.5" height="20.4" fill="#5f88a6"/><rect x="312.72" y="330.4" width="4.17" height="9.2" fill="#aebbc4"/><ellipse cx="314.8" cy="333.4" rx="1.3" ry="0.9" fill="#ecf1ec"/><circle cx="314.8" cy="335" r="1.2" fill="#111"/><rect x="312.72" y="340.7" width="4.17" height="9.2" fill="#aebbc4"/><ellipse cx="314.8" cy="343.7" rx="1.3" ry="0.9" fill="#ecf1ec"/><circle cx="314.8" cy="345.3" r="1.2" fill="#111"/><rect x="317.62" y="330.4" width="4.17" height="9.2" fill="#aebbc4"/><ellipse cx="319.7" cy="333.4" rx="1.3" ry="0.9" fill="#ecf1ec"/><circle cx="319.7" cy="335" r="1.2" fill="#111"/><rect x="317.62" y="340.7" width="4.17" height="9.2" fill="#aebbc4"/><ellipse cx="319.7" cy="343.7" rx="1.3" ry="0.9" fill="#ecf1ec"/><circle cx="319.7" cy="345.3" r="1.2" fill="#111"/><rect x="322.52" y="330.4" width="4.17" height="9.2" fill="#aebbc4"/><ellipse cx="324.6" cy="333.4" rx="1.3" ry="0.9" fill="#ecf1ec"/><circle cx="324.6" cy="335" r="1.2" fill="#111"/><rect x="322.52" y="340.7" width="4.17" height="9.2" fill="#aebbc4"/><ellipse cx="324.6" cy="343.7" rx="1.3" ry="0.9" fill="#ecf1ec"/><circle cx="324.6" cy="345.3" r="1.2" fill="#111"/><circle cx="314.8" cy="328.3" r="1.2" fill="#22d022"/><circle cx="314.8" cy="351" r="1.2" fill="#22d022"/><circle cx="319.7" cy="328.3" r="1.2" fill="#22d022"/><circle cx="319.7" cy="351" r="1.2" fill="#22d022"/><circle cx="324.6" cy="328.3" r="1.2" fill="#22d022"/><circle cx="324.6" cy="351" r="1.2" fill="#22d022"/><rect x="329" y="329.9" width="15" height="20.4" fill="#5f88a6"/><rect x="329.5" y="330.4" width="4.0" height="9.2" fill="#aebbc4"/><ellipse cx="331.5" cy="333.4" rx="1.3" ry="0.9" fill="#ecf1ec"/><circle cx="331.5" cy="335" r="1.2" fill="#111"/><rect x="329.5" y="340.7" width="4.0" height="9.2" fill="#aebbc4"/><ellipse cx="331.5" cy="343.7" rx="1.3" ry="0.9" fill="#ecf1ec"/><circle cx="331.5" cy="345.3" r="1.2" fill="#111"/><rect x="334.3" y="330.4" width="4.0" height="9.2" fill="#aebbc4"/><ellipse cx="336.3" cy="333.4" rx="1.3" ry="0.9" fill="#ecf1ec"/><circle cx="336.3" cy="335" r="1.2" fill="#111"/><rect x="334.3" y="340.7" width="4.0" height="9.2" fill="#aebbc4"/><ellipse cx="336.3" cy="343.7" rx="1.3" ry="0.9" fill="#ecf1ec"/><circle cx="336.3" cy="345.3" r="1.2" fill="#111"/><rect x="339.0" y="330.4" width="4.0" height="9.2" fill="#aebbc4"/><ellipse cx="341" cy="333.4" rx="1.3" ry="0.9" fill="#ecf1ec"/><circle cx="341" cy="335" r="1.2" fill="#111"/><rect x="339.0" y="340.7" width="4.0" height="9.2" fill="#aebbc4"/><ellipse cx="341" cy="343.7" rx="1.3" ry="0.9" fill="#ecf1ec"/><circle cx="341" cy="345.3" r="1.2" fill="#111"/><circle cx="331.5" cy="328.3" r="1.2" fill="#22d022"/><circle cx="331.5" cy="351" r="1.2" fill="#22d022"/><circle cx="336.3" cy="328.3" r="1.2" fill="#22d022"/><circle cx="336.3" cy="351" r="1.2" fill="#22d022"/><circle cx="341" cy="328.3" r="1.2" fill="#22d022"/><circle cx="341" cy="351" r="1.2" fill="#22d022"/><rect x="346" y="329.9" width="12" height="20.4" fill="#5f88a6"/><rect x="347.5" y="330.4" width="5.0" height="9.2" fill="#aebbc4"/><ellipse cx="350" cy="333.4" rx="1.3" ry="0.9" fill="#ecf1ec"/><circle cx="350" cy="335" r="1.2" fill="#111"/><rect x="347.5" y="340.7" width="5.0" height="9.2" fill="#aebbc4"/><ellipse cx="350" cy="343.7" rx="1.3" ry="0.9" fill="#ecf1ec"/><circle cx="350" cy="345.3" r="1.2" fill="#111"/><rect x="352.5" y="330.4" width="5.0" height="9.2" fill="#aebbc4"/><ellipse cx="355" cy="333.4" rx="1.3" ry="0.9" fill="#ecf1ec"/><circle cx="355" cy="335" r="1.2" fill="#111"/><rect x="352.5" y="340.7" width="5.0" height="9.2" fill="#aebbc4"/><ellipse cx="355" cy="343.7" rx="1.3" ry="0.9" fill="#ecf1ec"/><circle cx="355" cy="345.3" r="1.2" fill="#111"/><circle cx="350" cy="328.3" r="1.2" fill="#22d022"/><circle cx="350" cy="351" r="1.2" fill="#22d022"/><circle cx="355" cy="328.3" r="1.2" fill="#22d022"/><circle cx="355" cy="351" r="1.2" fill="#22d022"/><rect x="360.6" y="329.9" width="15.4" height="20.4" fill="#5f88a6"/><rect x="361.43" y="330.4" width="4.13" height="9.2" fill="#aebbc4"/><ellipse cx="363.5" cy="333.4" rx="1.3" ry="0.9" fill="#ecf1ec"/><circle cx="363.5" cy="335" r="1.2" fill="#111"/><rect x="361.43" y="340.7" width="4.13" height="9.2" fill="#aebbc4"/><ellipse cx="363.5" cy="343.7" rx="1.3" ry="0.9" fill="#ecf1ec"/><circle cx="363.5" cy="345.3" r="1.2" fill="#111"/><rect x="366.23" y="330.4" width="4.13" height="9.2" fill="#aebbc4"/><ellipse cx="368.3" cy="333.4" rx="1.3" ry="0.9" fill="#ecf1ec"/><circle cx="368.3" cy="335" r="1.2" fill="#111"/><rect x="366.23" y="340.7" width="4.13" height="9.2" fill="#aebbc4"/><ellipse cx="368.3" cy="343.7" rx="1.3" ry="0.9" fill="#ecf1ec"/><circle cx="368.3" cy="345.3" r="1.2" fill="#111"/><rect x="370.93" y="330.4" width="4.13" height="9.2" fill="#aebbc4"/><ellipse cx="373" cy="333.4" rx="1.3" ry="0.9" fill="#ecf1ec"/><circle cx="373" cy="335" r="1.2" fill="#111"/><rect x="370.93" y="340.7" width="4.13" height="9.2" fill="#aebbc4"/><ellipse cx="373" cy="343.7" rx="1.3" ry="0.9" fill="#ecf1ec"/><circle cx="373" cy="345.3" r="1.2" fill="#111"/><circle cx="363.5" cy="328.3" r="1.2" fill="#22d022"/><circle cx="363.5" cy="351" r="1.2" fill="#22d022"/><circle cx="368.3" cy="328.3" r="1.2" fill="#22d022"/><circle cx="368.3" cy="351" r="1.2" fill="#22d022"/><circle cx="373" cy="328.3" r="1.2" fill="#22d022"/><circle cx="373" cy="351" r="1.2" fill="#22d022"/><rect x="377" y="329.9" width="15.4" height="20.4" fill="#5f88a6"/><rect x="377.43" y="330.4" width="4.13" height="9.2" fill="#aebbc4"/><ellipse cx="379.5" cy="333.4" rx="1.3" ry="0.9" fill="#ecf1ec"/><circle cx="379.5" cy="335" r="1.2" fill="#111"/><rect x="377.43" y="340.7" width="4.13" height="9.2" fill="#aebbc4"/><ellipse cx="379.5" cy="343.7" rx="1.3" ry="0.9" fill="#ecf1ec"/><circle cx="379.5" cy="345.3" r="1.2" fill="#111"/><rect x="382.23" y="330.4" width="4.13" height="9.2" fill="#aebbc4"/><ellipse cx="384.3" cy="333.4" rx="1.3" ry="0.9" fill="#ecf1ec"/><circle cx="384.3" cy="335" r="1.2" fill="#111"/><rect x="382.23" y="340.7" width="4.13" height="9.2" fill="#aebbc4"/><ellipse cx="384.3" cy="343.7" rx="1.3" ry="0.9" fill="#ecf1ec"/><circle cx="384.3" cy="345.3" r="1.2" fill="#111"/><rect x="386.93" y="330.4" width="4.13" height="9.2" fill="#aebbc4"/><ellipse cx="389" cy="333.4" rx="1.3" ry="0.9" fill="#ecf1ec"/><circle cx="389" cy="335" r="1.2" fill="#111"/><rect x="386.93" y="340.7" width="4.13" height="9.2" fill="#aebbc4"/><ellipse cx="389" cy="343.7" rx="1.3" ry="0.9" fill="#ecf1ec"/><circle cx="389" cy="345.3" r="1.2" fill="#111"/><circle cx="379.5" cy="328.3" r="1.2" fill="#22d022"/><circle cx="379.5" cy="351" r="1.2" fill="#22d022"/><circle cx="384.3" cy="328.3" r="1.2" fill="#22d022"/><circle cx="384.3" cy="351" r="1.2" fill="#22d022"/><circle cx="389" cy="328.3" r="1.2" fill="#22d022"/><circle cx="389" cy="351" r="1.2" fill="#22d022"/><rect x="423" y="331" width="46.5" height="10" fill="#5f88a6"/><rect x="424.48" y="331.0" width="5.64" height="9.0" fill="#aebbc4"/><ellipse cx="427.3" cy="333.9" rx="1.3" ry="0.9" fill="#ecf1ec"/><circle cx="427.3" cy="335.5" r="1.2" fill="#111"/><rect x="431.68" y="331.0" width="5.64" height="9.0" fill="#aebbc4"/><ellipse cx="434.5" cy="333.9" rx="1.3" ry="0.9" fill="#ecf1ec"/><circle cx="434.5" cy="335.5" r="1.2" fill="#111"/><rect x="439.88" y="331.0" width="5.64" height="9.0" fill="#aebbc4"/><ellipse cx="442.7" cy="333.9" rx="1.3" ry="0.9" fill="#ecf1ec"/><circle cx="442.7" cy="335.5" r="1.2" fill="#111"/><rect x="446.68" y="331.0" width="5.64" height="9.0" fill="#aebbc4"/><ellipse cx="449.5" cy="333.9" rx="1.3" ry="0.9" fill="#ecf1ec"/><circle cx="449.5" cy="335.5" r="1.2" fill="#111"/><rect x="454.18" y="331.0" width="5.64" height="9.0" fill="#aebbc4"/><ellipse cx="457" cy="333.9" rx="1.3" ry="0.9" fill="#ecf1ec"/><circle cx="457" cy="335.5" r="1.2" fill="#111"/><rect x="459.18" y="331.0" width="5.64" height="9.0" fill="#aebbc4"/><ellipse cx="462" cy="333.9" rx="1.3" ry="0.9" fill="#ecf1ec"/><circle cx="462" cy="335.5" r="1.2" fill="#111"/><rect x="464.18" y="331.0" width="5.64" height="9.0" fill="#aebbc4"/><ellipse cx="467" cy="333.9" rx="1.3" ry="0.9" fill="#ecf1ec"/><circle cx="467" cy="335.5" r="1.2" fill="#111"/><rect x="470.5" y="331" width="32.5" height="20" fill="#9c6a70"/><rect x="471.79" y="331.0" width="4.42" height="9.0" fill="#bfb0b2"/><ellipse cx="474" cy="333.9" rx="1.3" ry="0.9" fill="#ecf1ec"/><circle cx="474" cy="335.5" r="1.2" fill="#111"/><rect x="471.79" y="341.3" width="4.42" height="9.0" fill="#bfb0b2"/><ellipse cx="474" cy="344.2" rx="1.3" ry="0.9" fill="#ecf1ec"/><circle cx="474" cy="345.8" r="1.2" fill="#111"/><rect x="476.79" y="331.0" width="4.42" height="9.0" fill="#bfb0b2"/><ellipse cx="479" cy="333.9" rx="1.3" ry="0.9" fill="#ecf1ec"/><circle cx="479" cy="335.5" r="1.2" fill="#111"/><rect x="476.79" y="341.3" width="4.42" height="9.0" fill="#bfb0b2"/><ellipse cx="479" cy="344.2" rx="1.3" ry="0.9" fill="#ecf1ec"/><circle cx="479" cy="345.8" r="1.2" fill="#111"/><rect x="481.79" y="331.0" width="4.42" height="9.0" fill="#bfb0b2"/><ellipse cx="484" cy="333.9" rx="1.3" ry="0.9" fill="#ecf1ec"/><circle cx="484" cy="335.5" r="1.2" fill="#111"/><rect x="481.79" y="341.3" width="4.42" height="9.0" fill="#bfb0b2"/><ellipse cx="484" cy="344.2" rx="1.3" ry="0.9" fill="#ecf1ec"/><circle cx="484" cy="345.8" r="1.2" fill="#111"/><rect x="487.79" y="331.0" width="4.42" height="9.0" fill="#bfb0b2"/><ellipse cx="490" cy="333.9" rx="1.3" ry="0.9" fill="#ecf1ec"/><circle cx="490" cy="335.5" r="1.2" fill="#111"/><rect x="487.79" y="341.3" width="4.42" height="9.0" fill="#bfb0b2"/><ellipse cx="490" cy="344.2" rx="1.3" ry="0.9" fill="#ecf1ec"/><circle cx="490" cy="345.8" r="1.2" fill="#111"/><rect x="492.79" y="331.0" width="4.42" height="9.0" fill="#bfb0b2"/><ellipse cx="495" cy="333.9" rx="1.3" ry="0.9" fill="#ecf1ec"/><circle cx="495" cy="335.5" r="1.2" fill="#111"/><rect x="492.79" y="341.3" width="4.42" height="9.0" fill="#bfb0b2"/><ellipse cx="495" cy="344.2" rx="1.3" ry="0.9" fill="#ecf1ec"/><circle cx="495" cy="345.8" r="1.2" fill="#111"/><rect x="497.29" y="331.0" width="4.42" height="9.0" fill="#bfb0b2"/><ellipse cx="499.5" cy="333.9" rx="1.3" ry="0.9" fill="#ecf1ec"/><circle cx="499.5" cy="335.5" r="1.2" fill="#111"/><rect x="497.29" y="341.3" width="4.42" height="9.0" fill="#bfb0b2"/><ellipse cx="499.5" cy="344.2" rx="1.3" ry="0.9" fill="#ecf1ec"/><circle cx="499.5" cy="345.8" r="1.2" fill="#111"/><rect x="458" y="341" width="11.5" height="10" fill="#5f88a6"/><rect x="458.62" y="341.3" width="4.75" height="9.0" fill="#aebbc4"/><ellipse cx="461" cy="344.2" rx="1.3" ry="0.9" fill="#ecf1ec"/><circle cx="461" cy="345.8" r="1.2" fill="#111"/><rect x="463.62" y="341.3" width="4.75" height="9.0" fill="#aebbc4"/><ellipse cx="466" cy="344.2" rx="1.3" ry="0.9" fill="#ecf1ec"/><circle cx="466" cy="345.8" r="1.2" fill="#111"/><circle cx="427.3" cy="329" r="1.2" fill="#2030d0"/><circle cx="434.5" cy="329" r="1.2" fill="#2030d0"/><circle cx="442.7" cy="329" r="1.2" fill="#2030d0"/><circle cx="449.5" cy="329" r="1.2" fill="#2030d0"/><circle cx="457" cy="329" r="1.2" fill="#22d022"/><circle cx="462" cy="329" r="1.2" fill="#22d022"/><circle cx="467" cy="329" r="1.2" fill="#22d022"/><circle cx="474" cy="329" r="1.2" fill="#22d022"/><circle cx="479" cy="329" r="1.2" fill="#22d022"/><circle cx="484" cy="329" r="1.2" fill="#22d022"/><circle cx="490" cy="329" r="1.2" fill="#22d022"/><circle cx="495" cy="329" r="1.2" fill="#22d022"/><circle cx="499.5" cy="329" r="1.2" fill="#22d022"/><circle cx="461" cy="351" r="1.2" fill="#22d022"/><circle cx="466" cy="351" r="1.2" fill="#22d022"/><circle cx="474" cy="351" r="1.2" fill="#22d022"/><circle cx="479" cy="351" r="1.2" fill="#22d022"/><circle cx="484" cy="351" r="1.2" fill="#22d022"/><circle cx="490" cy="351" r="1.2" fill="#22d022"/><circle cx="495" cy="351" r="1.2" fill="#22d022"/><circle cx="499.5" cy="351" r="1.2" fill="#22d022"/><rect x="476" y="307" width="27" height="11" fill="#9c6a70"/><rect x="477.3" y="307.8" width="4.4" height="10.0" fill="#bfb0b2"/><ellipse cx="479.5" cy="311.2" rx="1.3" ry="0.9" fill="#ecf1ec"/><circle cx="479.5" cy="312.8" r="1.2" fill="#111"/><rect x="481.8" y="307.8" width="4.4" height="10.0" fill="#bfb0b2"/><ellipse cx="484" cy="311.2" rx="1.3" ry="0.9" fill="#ecf1ec"/><circle cx="484" cy="312.8" r="1.2" fill="#111"/><rect x="487.8" y="307.8" width="4.4" height="10.0" fill="#bfb0b2"/><ellipse cx="490" cy="311.2" rx="1.3" ry="0.9" fill="#ecf1ec"/><circle cx="490" cy="312.8" r="1.2" fill="#111"/><rect x="492.8" y="307.8" width="4.4" height="10.0" fill="#bfb0b2"/><ellipse cx="495" cy="311.2" rx="1.3" ry="0.9" fill="#ecf1ec"/><circle cx="495" cy="312.8" r="1.2" fill="#111"/><rect x="497.3" y="307.8" width="4.4" height="10.0" fill="#bfb0b2"/><ellipse cx="499.5" cy="311.2" rx="1.3" ry="0.9" fill="#ecf1ec"/><circle cx="499.5" cy="312.8" r="1.2" fill="#111"/><circle cx="479.5" cy="319.2" r="1.2" fill="#22d022"/><circle cx="484" cy="319.2" r="1.2" fill="#22d022"/><circle cx="490" cy="319.2" r="1.2" fill="#22d022"/><circle cx="495" cy="319.2" r="1.2" fill="#22d022"/><circle cx="499.5" cy="319.2" r="1.2" fill="#22d022"/><rect x="516" y="294" width="10.5" height="7.5" fill="#9c6a70"/><rect x="516.25" y="294.55" width="9.5" height="6.5" fill="#bfb0b2"/><ellipse cx="521" cy="296.2" rx="1.3" ry="0.9" fill="#ecf1ec"/><circle cx="521" cy="297.8" r="1.2" fill="#111"/><circle cx="515" cy="298" r="1.2" fill="#22d022"/><rect x="374.7" y="363" width="18.6" height="48" fill="#5f88a6"/><rect x="374.85" y="364.83" width="8.3" height="4.33" fill="#aebbc4"/><ellipse cx="379" cy="365.4" rx="1.3" ry="0.9" fill="#ecf1ec"/><circle cx="379" cy="367" r="1.2" fill="#111"/><rect x="374.85" y="369.63" width="8.3" height="4.33" fill="#aebbc4"/><ellipse cx="379" cy="370.2" rx="1.3" ry="0.9" fill="#ecf1ec"/><circle cx="379" cy="371.8" r="1.2" fill="#111"/><rect x="374.85" y="374.43" width="8.3" height="4.33" fill="#aebbc4"/><ellipse cx="379" cy="375.0" rx="1.3" ry="0.9" fill="#ecf1ec"/><circle cx="379" cy="376.6" r="1.2" fill="#111"/><rect x="374.85" y="379.83" width="8.3" height="4.33" fill="#aebbc4"/><ellipse cx="379" cy="380.4" rx="1.3" ry="0.9" fill="#ecf1ec"/><circle cx="379" cy="382" r="1.2" fill="#111"/><rect x="374.85" y="384.63" width="8.3" height="4.33" fill="#aebbc4"/><ellipse cx="379" cy="385.2" rx="1.3" ry="0.9" fill="#ecf1ec"/><circle cx="379" cy="386.8" r="1.2" fill="#111"/><rect x="374.85" y="389.43" width="8.3" height="4.33" fill="#aebbc4"/><ellipse cx="379" cy="390.0" rx="1.3" ry="0.9" fill="#ecf1ec"/><circle cx="379" cy="391.6" r="1.2" fill="#111"/><rect x="374.85" y="394.83" width="8.3" height="4.33" fill="#aebbc4"/><ellipse cx="379" cy="395.4" rx="1.3" ry="0.9" fill="#ecf1ec"/><circle cx="379" cy="397" r="1.2" fill="#111"/><rect x="374.85" y="399.63" width="8.3" height="4.33" fill="#aebbc4"/><ellipse cx="379" cy="400.2" rx="1.3" ry="0.9" fill="#ecf1ec"/><circle cx="379" cy="401.8" r="1.2" fill="#111"/><rect x="374.85" y="404.43" width="8.3" height="4.33" fill="#aebbc4"/><ellipse cx="379" cy="405.0" rx="1.3" ry="0.9" fill="#ecf1ec"/><circle cx="379" cy="406.6" r="1.2" fill="#111"/><rect x="384.35" y="364.83" width="8.3" height="4.33" fill="#aebbc4"/><ellipse cx="388.5" cy="365.4" rx="1.3" ry="0.9" fill="#ecf1ec"/><circle cx="388.5" cy="367" r="1.2" fill="#111"/><rect x="384.35" y="369.63" width="8.3" height="4.33" fill="#aebbc4"/><ellipse cx="388.5" cy="370.2" rx="1.3" ry="0.9" fill="#ecf1ec"/><circle cx="388.5" cy="371.8" r="1.2" fill="#111"/><rect x="384.35" y="374.43" width="8.3" height="4.33" fill="#aebbc4"/><ellipse cx="388.5" cy="375.0" rx="1.3" ry="0.9" fill="#ecf1ec"/><circle cx="388.5" cy="376.6" r="1.2" fill="#111"/><rect x="384.35" y="379.83" width="8.3" height="4.33" fill="#aebbc4"/><ellipse cx="388.5" cy="380.4" rx="1.3" ry="0.9" fill="#ecf1ec"/><circle cx="388.5" cy="382" r="1.2" fill="#111"/><rect x="384.35" y="384.63" width="8.3" height="4.33" fill="#aebbc4"/><ellipse cx="388.5" cy="385.2" rx="1.3" ry="0.9" fill="#ecf1ec"/><circle cx="388.5" cy="386.8" r="1.2" fill="#111"/><rect x="384.35" y="389.43" width="8.3" height="4.33" fill="#aebbc4"/><ellipse cx="388.5" cy="390.0" rx="1.3" ry="0.9" fill="#ecf1ec"/><circle cx="388.5" cy="391.6" r="1.2" fill="#111"/><rect x="384.35" y="394.83" width="8.3" height="4.33" fill="#aebbc4"/><ellipse cx="388.5" cy="395.4" rx="1.3" ry="0.9" fill="#ecf1ec"/><circle cx="388.5" cy="397" r="1.2" fill="#111"/><rect x="384.35" y="399.63" width="8.3" height="4.33" fill="#aebbc4"/><ellipse cx="388.5" cy="400.2" rx="1.3" ry="0.9" fill="#ecf1ec"/><circle cx="388.5" cy="401.8" r="1.2" fill="#111"/><rect x="384.35" y="404.43" width="8.3" height="4.33" fill="#aebbc4"/><ellipse cx="388.5" cy="405.0" rx="1.3" ry="0.9" fill="#ecf1ec"/><circle cx="388.5" cy="406.6" r="1.2" fill="#111"/><circle cx="373.5" cy="367" r="1.2" fill="#22d022"/><circle cx="373.5" cy="371.8" r="1.2" fill="#22d022"/><circle cx="373.5" cy="376.6" r="1.2" fill="#22d022"/><circle cx="373.5" cy="382" r="1.2" fill="#22d022"/><circle cx="373.5" cy="386.8" r="1.2" fill="#22d022"/><circle cx="373.5" cy="391.6" r="1.2" fill="#22d022"/><circle cx="373.5" cy="397" r="1.2" fill="#22d022"/><circle cx="373.5" cy="401.8" r="1.2" fill="#22d022"/><circle cx="373.5" cy="406.6" r="1.2" fill="#22d022"/><circle cx="394.5" cy="367" r="1.2" fill="#22d022"/><circle cx="394.5" cy="371.8" r="1.2" fill="#22d022"/><circle cx="394.5" cy="376.6" r="1.2" fill="#22d022"/><circle cx="394.5" cy="382" r="1.2" fill="#22d022"/><circle cx="394.5" cy="386.8" r="1.2" fill="#22d022"/><circle cx="394.5" cy="391.6" r="1.2" fill="#22d022"/><circle cx="394.5" cy="397" r="1.2" fill="#22d022"/><circle cx="394.5" cy="401.8" r="1.2" fill="#22d022"/><circle cx="394.5" cy="406.6" r="1.2" fill="#22d022"/><rect x="405.5" y="363" width="10.5" height="48" fill="#5f88a6"/><rect x="405.75" y="364.83" width="9.5" height="4.33" fill="#aebbc4"/><ellipse cx="410.5" cy="365.4" rx="1.3" ry="0.9" fill="#ecf1ec"/><circle cx="410.5" cy="367" r="1.2" fill="#111"/><rect x="405.75" y="369.63" width="9.5" height="4.33" fill="#aebbc4"/><ellipse cx="410.5" cy="370.2" rx="1.3" ry="0.9" fill="#ecf1ec"/><circle cx="410.5" cy="371.8" r="1.2" fill="#111"/><rect x="405.75" y="374.43" width="9.5" height="4.33" fill="#aebbc4"/><ellipse cx="410.5" cy="375.0" rx="1.3" ry="0.9" fill="#ecf1ec"/><circle cx="410.5" cy="376.6" r="1.2" fill="#111"/><rect x="405.75" y="379.83" width="9.5" height="4.33" fill="#aebbc4"/><ellipse cx="410.5" cy="380.4" rx="1.3" ry="0.9" fill="#ecf1ec"/><circle cx="410.5" cy="382" r="1.2" fill="#111"/><rect x="405.75" y="384.63" width="9.5" height="4.33" fill="#aebbc4"/><ellipse cx="410.5" cy="385.2" rx="1.3" ry="0.9" fill="#ecf1ec"/><circle cx="410.5" cy="386.8" r="1.2" fill="#111"/><rect x="405.75" y="389.43" width="9.5" height="4.33" fill="#aebbc4"/><ellipse cx="410.5" cy="390.0" rx="1.3" ry="0.9" fill="#ecf1ec"/><circle cx="410.5" cy="391.6" r="1.2" fill="#111"/><rect x="405.75" y="394.83" width="9.5" height="4.33" fill="#aebbc4"/><ellipse cx="410.5" cy="395.4" rx="1.3" ry="0.9" fill="#ecf1ec"/><circle cx="410.5" cy="397" r="1.2" fill="#111"/><rect x="405.75" y="399.63" width="9.5" height="4.33" fill="#aebbc4"/><ellipse cx="410.5" cy="400.2" rx="1.3" ry="0.9" fill="#ecf1ec"/><circle cx="410.5" cy="401.8" r="1.2" fill="#111"/><rect x="405.75" y="404.43" width="9.5" height="4.33" fill="#aebbc4"/><ellipse cx="410.5" cy="405.0" rx="1.3" ry="0.9" fill="#ecf1ec"/><circle cx="410.5" cy="406.6" r="1.2" fill="#111"/><circle cx="404.7" cy="367" r="1.2" fill="#22d022"/><circle cx="404.7" cy="371.8" r="1.2" fill="#22d022"/><circle cx="404.7" cy="376.6" r="1.2" fill="#22d022"/><circle cx="404.7" cy="382" r="1.2" fill="#22d022"/><circle cx="404.7" cy="386.8" r="1.2" fill="#22d022"/><circle cx="404.7" cy="391.6" r="1.2" fill="#22d022"/><circle cx="404.7" cy="397" r="1.2" fill="#22d022"/><circle cx="404.7" cy="401.8" r="1.2" fill="#22d022"/><circle cx="404.7" cy="406.6" r="1.2" fill="#22d022"/><rect x="422" y="363.8" width="16.5" height="8.7" fill="#5f88a6"/><rect x="423.75" y="364.15" width="4.5" height="7.7" fill="#aebbc4"/><ellipse cx="426" cy="366.4" rx="1.3" ry="0.9" fill="#ecf1ec"/><circle cx="426" cy="368" r="1.2" fill="#111"/><rect x="428.75" y="364.15" width="4.5" height="7.7" fill="#aebbc4"/><ellipse cx="431" cy="366.4" rx="1.3" ry="0.9" fill="#ecf1ec"/><circle cx="431" cy="368" r="1.2" fill="#111"/><rect x="433.75" y="364.15" width="4.5" height="7.7" fill="#aebbc4"/><ellipse cx="436" cy="366.4" rx="1.3" ry="0.9" fill="#ecf1ec"/><circle cx="436" cy="368" r="1.2" fill="#111"/><circle cx="425.5" cy="361" r="1.2" fill="#22d022"/><circle cx="430.5" cy="361" r="1.2" fill="#22d022"/><circle cx="435.5" cy="361" r="1.2" fill="#22d022"/><rect x="270.7" y="387.2" width="9.6" height="9.6" fill="#5f88a6"/><rect x="271.1" y="387.7" width="3.8" height="8.6" fill="#aebbc4"/><ellipse cx="273" cy="390.4" rx="1.3" ry="0.9" fill="#ecf1ec"/><circle cx="273" cy="392" r="1.2" fill="#111"/><rect x="276.1" y="387.7" width="3.8" height="8.6" fill="#aebbc4"/><ellipse cx="278" cy="390.4" rx="1.3" ry="0.9" fill="#ecf1ec"/><circle cx="278" cy="392" r="1.2" fill="#111"/><circle cx="273" cy="397.8" r="1.2" fill="#22d022"/><circle cx="278" cy="397.8" r="1.2" fill="#22d022"/><rect x="281.5" y="387.2" width="14.7" height="9.6" fill="#5f88a6"/><rect x="281.55" y="387.7" width="3.9" height="8.6" fill="#aebbc4"/><ellipse cx="283.5" cy="390.4" rx="1.3" ry="0.9" fill="#ecf1ec"/><circle cx="283.5" cy="392" r="1.2" fill="#111"/><rect x="286.55" y="387.7" width="3.9" height="8.6" fill="#aebbc4"/><ellipse cx="288.5" cy="390.4" rx="1.3" ry="0.9" fill="#ecf1ec"/><circle cx="288.5" cy="392" r="1.2" fill="#111"/><rect x="291.55" y="387.7" width="3.9" height="8.6" fill="#aebbc4"/><ellipse cx="293.5" cy="390.4" rx="1.3" ry="0.9" fill="#ecf1ec"/><circle cx="293.5" cy="392" r="1.2" fill="#111"/><circle cx="283.5" cy="397.8" r="1.2" fill="#22d022"/><circle cx="288.5" cy="397.8" r="1.2" fill="#22d022"/><circle cx="293.5" cy="397.8" r="1.2" fill="#22d022"/><rect x="297.5" y="387.2" width="14.0" height="9.6" fill="#5f88a6"/><rect x="298.17" y="387.7" width="3.67" height="8.6" fill="#aebbc4"/><ellipse cx="300" cy="390.4" rx="1.3" ry="0.9" fill="#ecf1ec"/><circle cx="300" cy="392" r="1.2" fill="#111"/><rect x="302.67" y="387.7" width="3.67" height="8.6" fill="#aebbc4"/><ellipse cx="304.5" cy="390.4" rx="1.3" ry="0.9" fill="#ecf1ec"/><circle cx="304.5" cy="392" r="1.2" fill="#111"/><rect x="307.17" y="387.7" width="3.67" height="8.6" fill="#aebbc4"/><ellipse cx="309" cy="390.4" rx="1.3" ry="0.9" fill="#ecf1ec"/><circle cx="309" cy="392" r="1.2" fill="#111"/><circle cx="300" cy="397.8" r="1.2" fill="#22d022"/><circle cx="304.5" cy="397.8" r="1.2" fill="#22d022"/><circle cx="309" cy="397.8" r="1.2" fill="#22d022"/><rect x="312.7" y="387.2" width="14.7" height="9.6" fill="#5f88a6"/><rect x="313.05" y="387.7" width="3.9" height="8.6" fill="#aebbc4"/><ellipse cx="315" cy="390.4" rx="1.3" ry="0.9" fill="#ecf1ec"/><circle cx="315" cy="392" r="1.2" fill="#111"/><rect x="317.55" y="387.7" width="3.9" height="8.6" fill="#aebbc4"/><ellipse cx="319.5" cy="390.4" rx="1.3" ry="0.9" fill="#ecf1ec"/><circle cx="319.5" cy="392" r="1.2" fill="#111"/><rect x="322.55" y="387.7" width="3.9" height="8.6" fill="#aebbc4"/><ellipse cx="324.5" cy="390.4" rx="1.3" ry="0.9" fill="#ecf1ec"/><circle cx="324.5" cy="392" r="1.2" fill="#111"/><circle cx="315" cy="397.8" r="1.2" fill="#22d022"/><circle cx="319.5" cy="397.8" r="1.2" fill="#22d022"/><circle cx="324.5" cy="397.8" r="1.2" fill="#22d022"/><rect x="280" y="408.8" width="16" height="10.2" fill="#5f88a6"/><rect x="281.83" y="409.2" width="4.33" height="9.2" fill="#aebbc4"/><ellipse cx="284" cy="412.2" rx="1.3" ry="0.9" fill="#ecf1ec"/><circle cx="284" cy="413.8" r="1.2" fill="#111"/><rect x="286.33" y="409.2" width="4.33" height="9.2" fill="#aebbc4"/><ellipse cx="288.5" cy="412.2" rx="1.3" ry="0.9" fill="#ecf1ec"/><circle cx="288.5" cy="413.8" r="1.2" fill="#111"/><rect x="291.33" y="409.2" width="4.33" height="9.2" fill="#aebbc4"/><ellipse cx="293.5" cy="412.2" rx="1.3" ry="0.9" fill="#ecf1ec"/><circle cx="293.5" cy="413.8" r="1.2" fill="#111"/><circle cx="284" cy="407.3" r="1.2" fill="#22d022"/><circle cx="288.5" cy="407.3" r="1.2" fill="#22d022"/><circle cx="293.5" cy="407.3" r="1.2" fill="#22d022"/><rect x="297" y="408.8" width="15" height="10.2" fill="#5f88a6"/><rect x="297.0" y="409.2" width="4.0" height="9.2" fill="#aebbc4"/><ellipse cx="299" cy="412.2" rx="1.3" ry="0.9" fill="#ecf1ec"/><circle cx="299" cy="413.8" r="1.2" fill="#111"/><rect x="302.0" y="409.2" width="4.0" height="9.2" fill="#aebbc4"/><ellipse cx="304" cy="412.2" rx="1.3" ry="0.9" fill="#ecf1ec"/><circle cx="304" cy="413.8" r="1.2" fill="#111"/><rect x="307.0" y="409.2" width="4.0" height="9.2" fill="#aebbc4"/><ellipse cx="309" cy="412.2" rx="1.3" ry="0.9" fill="#ecf1ec"/><circle cx="309" cy="413.8" r="1.2" fill="#111"/><circle cx="299" cy="407.3" r="1.2" fill="#22d022"/><circle cx="304" cy="407.3" r="1.2" fill="#22d022"/><circle cx="309" cy="407.3" r="1.2" fill="#22d022"/><rect x="313" y="408.8" width="15" height="10.2" fill="#5f88a6"/><rect x="313.0" y="409.2" width="4.0" height="9.2" fill="#aebbc4"/><ellipse cx="315" cy="412.2" rx="1.3" ry="0.9" fill="#ecf1ec"/><circle cx="315" cy="413.8" r="1.2" fill="#111"/><rect x="318.0" y="409.2" width="4.0" height="9.2" fill="#aebbc4"/><ellipse cx="320" cy="412.2" rx="1.3" ry="0.9" fill="#ecf1ec"/><circle cx="320" cy="413.8" r="1.2" fill="#111"/><rect x="322.5" y="409.2" width="4.0" height="9.2" fill="#aebbc4"/><ellipse cx="324.5" cy="412.2" rx="1.3" ry="0.9" fill="#ecf1ec"/><circle cx="324.5" cy="413.8" r="1.2" fill="#111"/><circle cx="315" cy="407.3" r="1.2" fill="#22d022"/><circle cx="320" cy="407.3" r="1.2" fill="#22d022"/><circle cx="324.5" cy="407.3" r="1.2" fill="#22d022"/><rect x="329" y="408.8" width="14" height="10.2" fill="#5f88a6"/><rect x="328.67" y="409.2" width="3.67" height="9.2" fill="#aebbc4"/><ellipse cx="330.5" cy="412.2" rx="1.3" ry="0.9" fill="#ecf1ec"/><circle cx="330.5" cy="413.8" r="1.2" fill="#111"/><rect x="333.67" y="409.2" width="3.67" height="9.2" fill="#aebbc4"/><ellipse cx="335.5" cy="412.2" rx="1.3" ry="0.9" fill="#ecf1ec"/><circle cx="335.5" cy="413.8" r="1.2" fill="#111"/><rect x="338.67" y="409.2" width="3.67" height="9.2" fill="#aebbc4"/><ellipse cx="340.5" cy="412.2" rx="1.3" ry="0.9" fill="#ecf1ec"/><circle cx="340.5" cy="413.8" r="1.2" fill="#111"/><circle cx="330.5" cy="407.3" r="1.2" fill="#22d022"/><circle cx="335.5" cy="407.3" r="1.2" fill="#22d022"/><circle cx="340.5" cy="407.3" r="1.2" fill="#22d022"/><rect x="344" y="424.7" width="12" height="10.3" fill="#9c9478"/><rect x="344.5" y="425.35" width="5.0" height="9.3" fill="#bdb69c"/><ellipse cx="347" cy="428.4" rx="1.3" ry="0.9" fill="#ecf1ec"/><circle cx="347" cy="430" r="1.2" fill="#111"/><rect x="349.5" y="425.35" width="5.0" height="9.3" fill="#bdb69c"/><ellipse cx="352" cy="428.4" rx="1.3" ry="0.9" fill="#ecf1ec"/><circle cx="352" cy="430" r="1.2" fill="#111"/><circle cx="346.5" cy="424" r="1.2" fill="#22d022"/><circle cx="352" cy="424" r="1.2" fill="#22d022"/><line x1="361" y1="321" x2="372" y2="321" stroke="#d6dbd6" stroke-width="1.1"/><line x1="361" y1="326.6" x2="372" y2="326.6" stroke="#d6dbd6" stroke-width="1.1"/><line x1="383" y1="320.5" x2="392" y2="320.5" stroke="#d6dbd6" stroke-width="1.1"/><line x1="400" y1="321" x2="408" y2="321" stroke="#d6dbd6" stroke-width="1.1"/><line x1="400" y1="326" x2="408" y2="326" stroke="#d6dbd6" stroke-width="1.1"/><line x1="443" y1="321" x2="453" y2="321" stroke="#d6dbd6" stroke-width="1.1"/><line x1="443" y1="326" x2="453" y2="326" stroke="#d6dbd6" stroke-width="1.1"/><line x1="317" y1="358.5" x2="327" y2="358.5" stroke="#d6dbd6" stroke-width="1.1"/><line x1="466" y1="353" x2="473" y2="353" stroke="#d6dbd6" stroke-width="1.1"/><line x1="466" y1="359" x2="473" y2="359" stroke="#d6dbd6" stroke-width="1.1"/><line x1="534" y1="305" x2="538" y2="305" stroke="#d6dbd6" stroke-width="1.1"/><line x1="534" y1="312" x2="538" y2="312" stroke="#d6dbd6" stroke-width="1.1"/><line x1="400" y1="335" x2="400" y2="342" stroke="#dee3de" stroke-width="1.3"/><path d="M397.5 340.5L400 344L402.5 340.5" fill="none" stroke="#dee3de" stroke-width="1.1"/><line x1="428" y1="385" x2="429" y2="390" stroke="#ced3ce" stroke-width="1.0"/><line x1="434.5" y1="385" x2="435.5" y2="390" stroke="#ced3ce" stroke-width="1.0"/><line x1="348.5" y1="309" x2="350.5" y2="313.5" stroke="#d6dbd6" stroke-width="1.3"/><path d="M510 335V341Q510 343 508 343" fill="none" stroke="#d6dbd6" stroke-width="1"/><line x1="354.6" y1="353" x2="362.7" y2="353" stroke="#cdd2cd" stroke-width="1.0"/><line x1="379" y1="360.3" x2="385.7" y2="360.3" stroke="#cdd2cd" stroke-width="1.0"/><line x1="408.6" y1="353" x2="416.8" y2="353" stroke="#cdd2cd" stroke-width="1.0"/><line x1="333" y1="374" x2="344" y2="374" stroke="#cdd2cd" stroke-width="1.0"/><line x1="300" y1="360" x2="312" y2="360" stroke="#cdd2cd" stroke-width="1.0"/><line x1="322" y1="353.5" x2="330" y2="353.5" stroke="#cdd2cd" stroke-width="1.0"/><path d="M384 361Q387 358 391 359" fill="none" stroke="#dadfda" stroke-width="1.1"/><path d="M408.6 358.5Q414 359 418.4 361" fill="none" stroke="#dadfda" stroke-width="1.1"/><line x1="365.2" y1="365" x2="365.2" y2="375" stroke="#ced3ce" stroke-width="1.0"/><path d="M374 366Q370 367 371 370" fill="none" stroke="#dee3de" stroke-width="1.1"/><path d="M402 371Q400.5 374 402.5 377" fill="none" stroke="#dee3de" stroke-width="1.1"/><line x1="347" y1="395" x2="350" y2="405" stroke="#d6dbd6" stroke-width="1.0"/><line x1="355" y1="395" x2="357" y2="405" stroke="#d6dbd6" stroke-width="1.0"/><line x1="357.5" y1="378" x2="361" y2="378" stroke="#d6dbd6" stroke-width="1.0"/><path d="M593 297.5V305.2L594.8 303.6L596.2 306.6L597.3 306.1L596 303.2H598.4Z" fill="#f2f2f2" stroke="#333" stroke-width="0.5"/></svg>
</body></html>
